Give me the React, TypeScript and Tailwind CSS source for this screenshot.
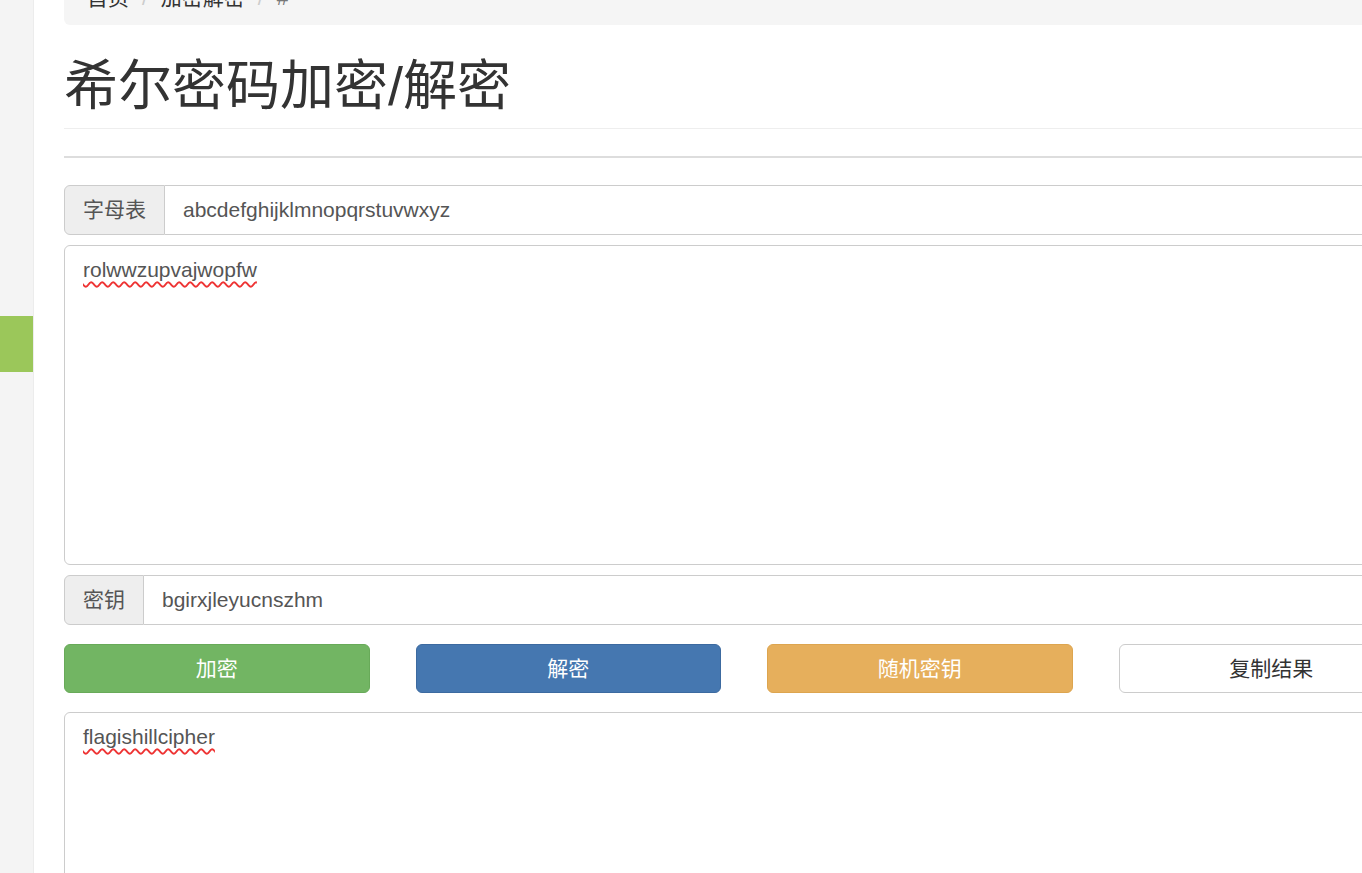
import React from "react";

const FONT = { fontFamily: '"Liberation Sans", "Noto Sans CJK SC", sans-serif' };

function AddonInput({ label, value }: { label: string; value: string }) {
  return (
    <div className="flex h-[50px] w-full">
      <span className="flex items-center px-[18px] bg-[#eeeeee] border border-[#cccccc] rounded-l-[6px] text-[21px] text-[#555555]">{label}</span>
      <div className="flex-1 flex items-center pl-[18px] border border-l-0 border-[#cccccc] rounded-r-[6px] bg-white text-[21px] text-[#555555]">{value}</div>
    </div>
  );
}

function TextBox({ text, height }: { text: string; height: string }) {
  return (
    <div className={`w-full ${height} border border-[#cccccc] rounded-[6px] bg-white px-[18px] py-[9px] text-[21px] leading-[30px] text-[#555555]`}>
      <span className="underline decoration-wavy decoration-[#ee3333] decoration-[1.5px] underline-offset-[4px]">{text}</span>
    </div>
  );
}

export default function App() {
  return (
    <div className="w-screen h-[873px] overflow-hidden bg-white flex" style={FONT}>
      <aside className="w-[34px] shrink-0 bg-[#f4f4f4] border-r border-[#ececec] flex flex-col">
        <div className="h-[316px]" />
        <div className="h-[56px] w-[33px] bg-[#9bc75a]" />
      </aside>
      <main className="shrink-0 w-[1360px] ml-[30px] flex flex-col">
        <nav className="mt-[-29px] h-[55px] bg-[#f5f5f5] rounded-[6px] px-[23px] py-[12px] flex items-center text-[21px] leading-[30px] text-[#333333]">
          <span>首页</span>
          <span className="px-[13px] text-[#cccccc]">/</span>
          <span>加密解密</span>
          <span className="px-[13px] text-[#cccccc]">/</span>
          <span className="text-[#777777]">#</span>
        </nav>
        <div className="mt-[32px] pb-[12px] border-b border-[#eeeeee]">
          <h1 className="text-[54px] leading-[59px] text-[#333333] font-normal">希尔密码加密/解密</h1>
        </div>
        <hr className="mt-[27px] border-0 border-t-2 border-[#dddddd]" />
        <div className="mt-[27px] flex flex-col">
          <AddonInput label="字母表" value="abcdefghijklmnopqrstuvwxyz" />
          <div className="mt-[10px]">
            <TextBox text="rolwwzupvajwopfw" height="h-[320px]" />
          </div>
          <div className="mt-[10px]">
            <AddonInput label="密钥" value="bgirxjleyucnszhm" />
          </div>
          <div className="mt-[19px] grid grid-cols-4 gap-[46px]">
            <button className="h-[49px] rounded-[6px] bg-[#72b563] border border-[#68aa59] text-white text-[21px]">加密</button>
            <button className="h-[49px] rounded-[6px] bg-[#4577b0] border border-[#3c6aa0] text-white text-[21px]">解密</button>
            <button className="h-[49px] rounded-[6px] bg-[#e6af5c] border border-[#dda54f] text-white text-[21px]">随机密钥</button>
            <button className="h-[49px] rounded-[6px] bg-white border border-[#cccccc] text-[#333333] text-[21px]">复制结果</button>
          </div>
          <div className="mt-[19px]">
            <TextBox text="flagishillcipher" height="h-[320px]" />
          </div>
        </div>
      </main>
    </div>
  );
}
